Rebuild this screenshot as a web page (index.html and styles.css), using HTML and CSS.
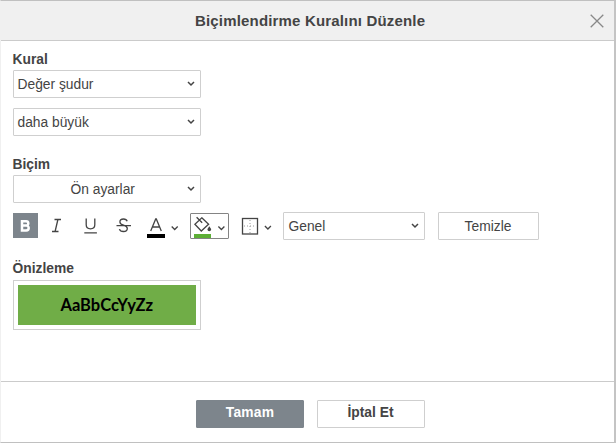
FILE: index.html
```html
<!DOCTYPE html>
<html lang="tr">
<head>
<meta charset="utf-8">
<title>Biçimlendirme Kuralını Düzenle</title>
<link rel="stylesheet" href="styles.css">
</head>
<body>
<div class="dialog">
  <header class="header">
    <h1 class="title"><span>Biçimlendirme Kuralını Düzenle</span></h1>
    <svg class="close" width="14" height="14" viewBox="0 0 14 14"><path d="M.7.7l12.6 12.6M13.3.7L.7 13.3"/></svg>
  </header>
  <main class="content">
    <h2 class="label rule-label">Kural</h2>
    <div class="select"><span>Değer şudur</span><svg class="chevron" width="8" height="6" viewBox="0 0 8 6"><path d="M1 1l3 3 3-3"/></svg></div>
    <div class="select second"><span>daha büyük</span><svg class="chevron" width="8" height="6" viewBox="0 0 8 6"><path d="M1 1l3 3 3-3"/></svg></div>
    <h2 class="label format-label">Biçim</h2>
    <div class="select presets"><span>Ön ayarlar</span><svg class="chevron" width="8" height="6" viewBox="0 0 8 6"><path d="M1 1l3 3 3-3"/></svg></div>
    <div class="toolbar">
      <div class="tool bold"><svg width="25" height="25" viewBox="0 0 25 25"><path d="M9 8.2h4.1a2.2 2.2 0 0 1 0 4.4H9M13.3 12.6a2.4 2.4 0 0 1 0 4.8H9V7"/></svg></div>
      <div class="tool italic"><svg width="25" height="25" viewBox="0 0 25 25"><path d="M9.5 7.5H16M7 19.5h6.5M12.9 7.5l-2.8 12"/></svg></div>
      <div class="tool underline"><svg width="25" height="25" viewBox="0 0 25 25"><path d="M8.2 6.5v6.3c0 2.5 1.6 4 4.3 4s4.3-1.5 4.3-4V6.5M6.3 20.9h12.6"/></svg></div>
      <div class="tool strike"><svg width="25" height="25" viewBox="0 0 25 25"><path d="M16.2 9.2c-.6-1.6-1.8-2.2-3.7-2.2-2.1 0-3.6 1-3.6 2.9 0 2 1.7 2.7 3.6 3.3 2.3.7 3.8 1.4 3.8 3.3s-1.6 3-3.8 3c-2.1 0-3.6-.8-4.1-2.4M5.5 13.7h14.5"/></svg></div>
      <div class="font-color"><svg width="36" height="27" viewBox="0 0 36 27"><path d="M3.7 19L8.7 7h.6l5 12M5.6 15h6.8"/><rect class="ink" y="22" width="18" height="4"/><path d="M24.7 14.5l3 3 3-3"/></svg></div>
      <div class="fill-color"><svg width="37" height="24" viewBox="0 0 37 24"><path d="M10.8 3.8l6.8 6.4-7.3 6.8-6.4-6.7zM5.6 3.2l5.6 5.6"/><path class="drop" d="M18.3 12.2c1.3 1.7 1.8 2.6 1.8 3.3a1.8 1.8 0 0 1-3.6 0c0-.7.5-1.6 1.8-3.3z"/><rect class="green" x="3" y="20" width="17" height="4"/><path d="M27.4 12.5l3 3 3-3"/></svg></div>
      <div class="borders"><svg width="32" height="25" viewBox="0 0 32 25"><rect x="1.5" y="6.5" width="15" height="15.5"/><path class="dots" d="M9 8v13M3 14h12"/><path d="M23.9 14l3 3 3-3"/></svg></div>
      <div class="select number"><span>Genel</span><svg class="chevron" width="8" height="6" viewBox="0 0 8 6"><path d="M1 1l3 3 3-3"/></svg></div>
      <button class="clear"><span>Temizle</span></button>
    </div>
    <h2 class="label preview-label">Önizleme</h2>
    <div class="preview"><div class="sample"><span>AaBbCcYyZz</span></div></div>
  </main>
  <footer class="footer">
    <button class="ok"><span>Tamam</span></button>
    <button class="cancel"><span>İptal Et</span></button>
  </footer>
</div>
</body>
</html>
```
FILE: styles.css
```css
* { box-sizing: border-box; }
body {
  margin: 0;
  background: #fff;
  color: #444;
  font-family: "Liberation Sans", Arial, sans-serif;
  font-size: 13.8px;
}
.dialog {
  width: 616px;
  height: 443px;
  display: flex;
  flex-direction: column;
  border: 1px solid #c0c0c0;
  border-left-color: #f0f0f0;
  border-right: 2px solid #c4c4c4;
}
.header {
  height: 40px;
  flex: none;
  display: flex;
  align-items: center;
  background: #f0f0f0;
  border-bottom: 1px solid #cbcbcb;
  padding-right: 10px;
}
.title {
  margin: 0;
  flex: 1;
  padding-left: 194px;
  font-size: 15px;
  line-height: 18px;
  letter-spacing: .17px;
  white-space: nowrap;
}
svg { display: block; fill: none; stroke: #444; stroke-width: 1.3; }
.close { stroke: #888; stroke-width: 1.3; }
.content { flex: 1; padding: 11px 12px 0 11.5px; }
.label {
  margin: 0;
  height: 18px;
  font-size: 13.8px;
  line-height: 16px;
}
.select {
  width: 188.5px;
  height: 28px;
  display: flex;
  align-items: center;
  justify-content: space-between;
  border: 1px solid #cfcfcf;
  border-radius: 1px;
  background: #fff;
  padding: 0 5px 0 4px;
  white-space: nowrap;
}
.chevron { stroke-width: 1.5; }
.second { margin-top: 10px; }
.format-label { margin-top: 21px; }
.presets { padding-left: 57px; }
.toolbar { display: flex; align-items: flex-start; height: 28px; margin-top: 9px; }
.tool { width: 25px; height: 25px; margin-right: 8px; }
.bold, .fill-color { margin-top: 1px; }
.bold { background: #7d858c; margin-right: 7px; }
.bold svg { stroke: #fff; stroke-width: 2.5; }
.strike { margin-right: 11px; }
.font-color { margin-right: 7px; }
.ink { fill: #000; stroke: none; }
.fill-color { width: 39px; height: 26px; border: 1px solid #848484; border-radius: 1px; margin-right: 12px; }
.drop { fill: #444; stroke: none; }
.green { fill: #5cae35; stroke: none; }
.borders { margin-right: 10px; }
.dots { stroke: #999; stroke-width: 1; stroke-dasharray: 1 2; }
.number { width: 142px; padding-left: 5px; }
button {
  border: 1px solid #cfcfcf;
  border-radius: 1px;
  background: #fff;
  color: #444;
  padding: 0;
  font: 13.8px "Liberation Sans", Arial, sans-serif;
}
.clear { width: 101px; height: 28px; margin-left: 13px; }
.preview-label { margin-top: 21px; height: 19px; }
.preview { width: 188.5px; height: 50px; padding: 4px; border: 1px solid #cfcfcf; }
.sample {
  height: 40px;
  display: flex;
  align-items: center;
  justify-content: center;
  background: #70ad47;
  color: #000;
  font: bold 16.5px Lato, sans-serif;
}
.footer {
  height: 61px;
  flex: none;
  display: flex;
  gap: 13px;
  padding: 18px 0 0 195px;
  border-top: 1px solid #cbcbcb;
}
.footer button { width: 108px; height: 28px; padding-bottom: 3px; font-weight: bold; }
.footer .cancel { padding-right: 1px; }
.footer .ok { background: #7d858c; border-color: #7d858c; color: #fff; letter-spacing: .2px; }
```
